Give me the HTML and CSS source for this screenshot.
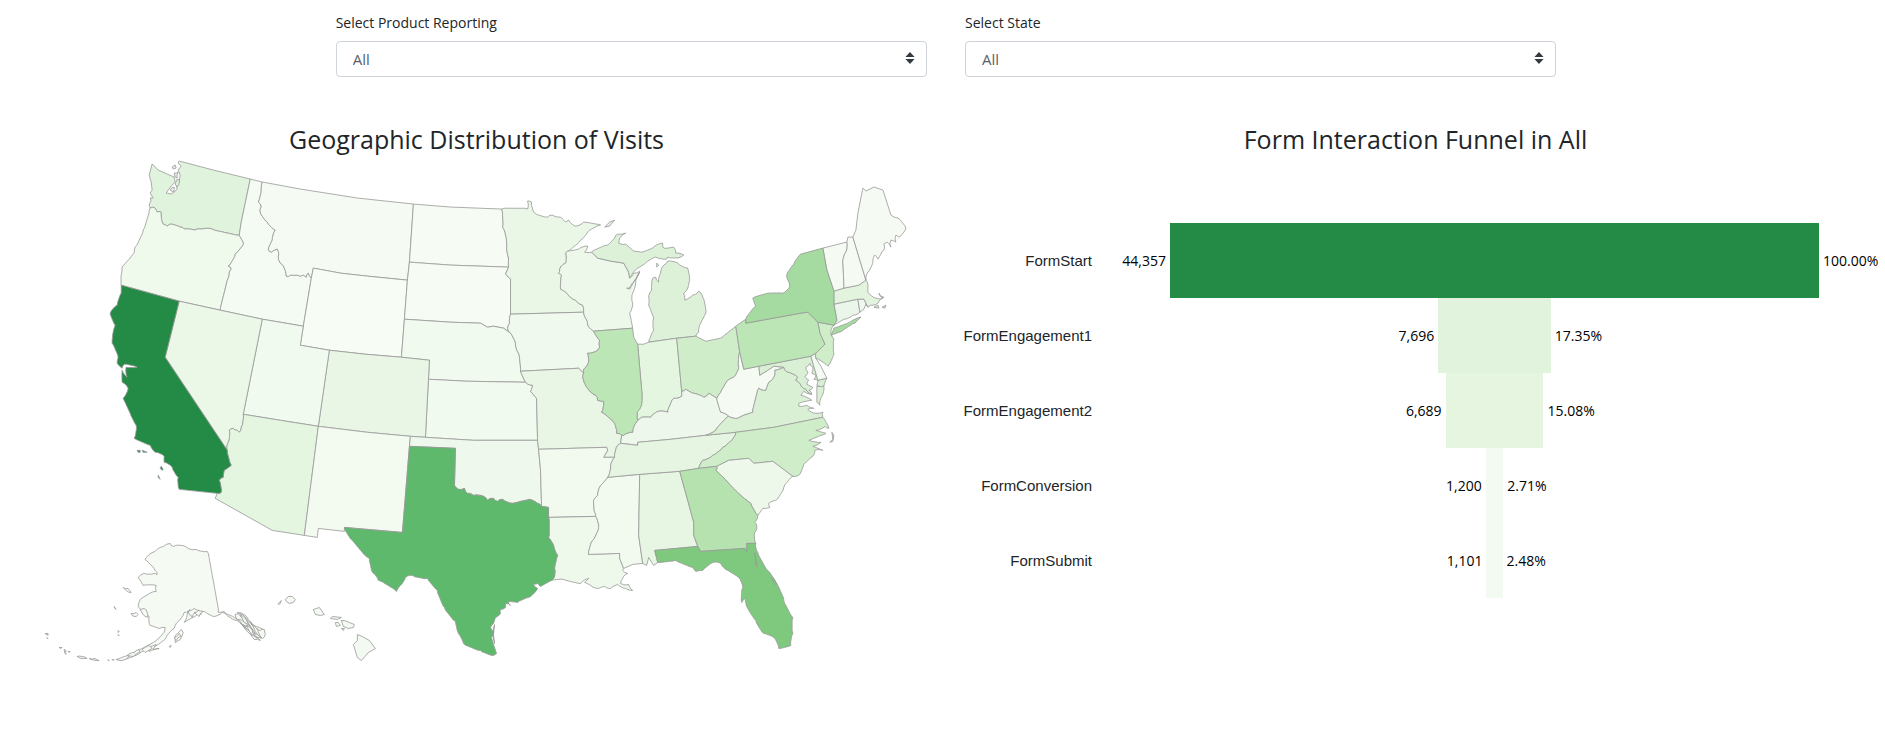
FILE: index.html
```html
<!DOCTYPE html>
<html lang="en">
<head>
<meta charset="utf-8">
<title>Form visits dashboard</title>
<link rel="stylesheet" href="styles.css">
</head>
<body>
<main class="page">
  <form class="filters">
    <div class="filter">
      <label class="filter-label" for="product">Select Product Reporting</label>
      <div class="select-wrap">
        <select class="select" id="product"><option>All</option></select>
        <svg class="select-arrows" viewBox="0 0 10 12" aria-hidden="true"><path d="M5 0 9.6 5H.4zM5 12 .4 7h9.2z"/></svg>
      </div>
    </div>
    <div class="filter">
      <label class="filter-label" for="state">Select State</label>
      <div class="select-wrap">
        <select class="select" id="state"><option>All</option></select>
        <svg class="select-arrows" viewBox="0 0 10 12" aria-hidden="true"><path d="M5 0 9.6 5H.4zM5 12 .4 7h9.2z"/></svg>
      </div>
    </div>
  </form>
  <div class="charts">
    <section class="chart">
      <h2 class="chart-title">Geographic Distribution of Visits</h2>
      <svg class="map" id="map" viewBox="7 156 938 530" role="img" aria-label="Visits by state"></svg>
    </section>
    <section class="chart">
      <h2 class="chart-title">Form Interaction Funnel in All</h2>
      <div class="funnel">
        <div class="step"><span class="step-name">FormStart</span><div class="track"><span class="count">44,357</span><div class="bar bar-start" style="width:100%"></div><span class="share">100.00%</span></div></div>
        <div class="step"><span class="step-name">FormEngagement1</span><div class="track"><span class="count">7,696</span><div class="bar bar-engage1" style="width:17.35%"></div><span class="share">17.35%</span></div></div>
        <div class="step"><span class="step-name">FormEngagement2</span><div class="track"><span class="count">6,689</span><div class="bar bar-engage2" style="width:15.08%"></div><span class="share">15.08%</span></div></div>
        <div class="step"><span class="step-name">FormConversion</span><div class="track"><span class="count">1,200</span><div class="bar bar-convert" style="width:2.71%"></div><span class="share">2.71%</span></div></div>
        <div class="step"><span class="step-name">FormSubmit</span><div class="track"><span class="count">1,101</span><div class="bar bar-convert" style="width:2.48%"></div><span class="share">2.48%</span></div></div>
      </div>
    </section>
  </div>
</main>
<script src="map.js"></script>
</body>
</html>
```

FILE: styles.css
```css
* { box-sizing: border-box; }
body {
  margin: 0;
  background: #fff;
  color: #212529;
  font-family: "Open Sans", "Noto Sans", sans-serif;
}
.page { padding: 12px 0 0 7px; }
.filters {
  display: grid;
  grid-template-columns: 1fr 1fr;
  gap: 38px;
  width: 65%;
  margin: 0 auto;
}
.filter-label {
  display: block;
  margin-bottom: 7px;
  font-size: 14px;
  line-height: 22px;
}
.select-wrap { position: relative; }
.select {
  display: block;
  width: 100%;
  height: 36px;
  padding: 0 30px 0 16px;
  border: 1px solid #ced4da;
  border-radius: 4px;
  background: #fff;
  color: #5a6169;
  font: 15px "Open Sans", "Noto Sans", sans-serif;
  appearance: none;
}
.select-arrows {
  position: absolute;
  top: 10px;
  right: 12px;
  width: 10px;
  height: 14px;
  fill: #343a40;
  pointer-events: none;
}
.charts {
  display: grid;
  grid-template-columns: 1fr 1fr;
  padding-top: 45px;
}
.chart-title {
  margin: 0;
  font-size: 25px;
  font-weight: 400;
  line-height: 34px;
  text-align: center;
}
.map { display: block; width: 100%; }
.state {
  stroke: #999;
  stroke-width: 0.8;
  stroke-linejoin: round;
}
.funnel { padding: 67px 66px 0 0; }
.step {
  display: grid;
  grid-template-columns: 146px 1fr;
  column-gap: 78px;
  align-items: center;
  height: 75px;
}
.step-name {
  font-family: "Liberation Sans", Arial, sans-serif;
  font-size: 15px;
  text-align: right;
}
.track {
  display: flex;
  align-items: center;
  justify-content: center;
  height: 100%;
  color: #000;
  font-size: 14px;
  white-space: nowrap;
}
.bar { flex: none; height: 100%; }
.bar-start { background: #238b45; }
.bar-engage1 { background: #e1f3dc; }
.bar-engage2 { background: #e5f5e0; }
.bar-convert { background: #f3faf1; }
.count, .share {
  display: flex;
  flex: 1 1 0;
  width: 0;
  min-width: 0;
}
.count { justify-content: flex-end; margin-right: 4px; }
.share { margin-left: 4px; }
```

FILE: map.js
```js
// Borders shared between states; a leading "~" marks a river or shore that is drawn rough.
const arcs = {
  waCoast: "150,208 149,205 151,200 150,198 153,198 150,193 152,190 151,182 149,175 152,164 158,170 167,174 174,177 175,182 172,185 168,190 166,193 171,194 174,192 177,189 176,185 179,182 180,175 178,170 181,166 178,163 179,161",
  waTop: "179,161 213,170 250,179",
  waId: "250,179 241,222 239,235",
  waOr: "~150,208 155,208 157,212 161,212 162,222 163,224 167,226 170,224 180,227 184,229 194,230 202,229 212,229 239,235",
  orCoast: "~121,285 121,275 122,267 130,258 134,253 135,247 143,230 149,210 150,208",
  orId: "~239,235 243,242 242,246 235,254 228,266 231,269 229,275 228,278 220,310",
  caOr: "121,285 179,301", orNv: "179,301 220,310",
  idMt: "~262,182 261,190 258,202 261,207 260,212 267,222 275,230 272,240 268,249 271,252 274,250 277,249 278,257 281,264 284,268 286,276 290,275 297,275 300,276 303,275 306,277 308,273 311,278",
  idTop: "250,179 262,182", idWy: "311,278 303,326", idNv: "220,310 262,319", idUt: "262,319 303,326",
  mtTop: "262,182 300,189 357,198 413,204", mtNd: "413,204 409,262", mtSd: "409,262 407,280",
  mtWy: "311,278 313,268 340,273 367,276 407,280",
  wySd: "407,280 404,319", wyNe: "404,319 401,357", wyUt: "303,326 300,345 329,350", wyCo: "329,350 365,354 401,357",
  ndTop: "413,204 450,207 501,209", ndSd: "409,262 450,265 508,267",
  ndMn: "~501,209 502,227 505,235 506,248 508,258 508,267",
  sdMn: "508,267 505,274 510,279 510,314",
  mnTop: "~501,209 527,209 527,201 531,202 534,213 547,217 552,215 560,217 565,222 568,220 575,226 583,222 600,225 587,232 580,240 567,251",
  mnWi: "~567,251 565,253 565,263 559,269 558,273 561,275 560,289 567,294 575,300 582,305 583,312",
  mnIa: "510,314 583,312",
  sdIa: "~510,314 509,323 507,328 510,333",
  sdNe: "404,319 450,322 480,323 487,327 493,326 503,328 510,333",
  neIa: "~510,333 515,343 518,353 520,371", neMo: "~520,371 525,382",
  neCo: "401,357 429,360 428,379", neKs: "428,379 467,381 525,382",
  ksMo: "~525,382 532,385 530,391 536,398", ksMo2: "536,398 537,440",
  ksCo: "428,379 425,437", ksOk: "425,437 473,440 537,440",
  coOk: "410,436 425,437", coNm: "318,426 367,432 410,436", utCo: "329,350 318,426",
  okNm: "410,436 409,446", txOk: "409,446 455,448 454,485",
  txOk2: "~454,485 458,489 464,488 467,493 473,495 483,496 487,500 493,498 497,501 502,499 512,503 520,501 529,499 537,503 541,506",
  txAr: "541,506 548,507 548,517", txLa: "~548,517 548,537 553,545 557,555 554,568 553,578 551,580",
  okMo: "537,440 538,449", okAr: "538,449 540,470 541,506",
  txNm: "409,446 402,532 344,527",
  nmSouth: "304,535 317,537 318,528 344,531 344,527",
  rioGrande: "~344,527 352,540 362,552 369,558 372,572 378,580 396,591 400,585 405,577 412,575 427,578 437,590 444,607 455,621 458,633 463,643 480,650 493,655",
  txCoast: "~493,655 496,653 491,637 493,631 490,627 493,623 495,617 500,613 500,609 505,607 505,603 510,605 508,601 517,602 528,597 537,588 533,583 537,583 540,586 551,580",
  azNm: "318,426 304,535", azSouth: "304,535 272,530 215,498 217,493",
  caAz: "~217,493 221,492 219,480 223,477 224,470 231,465 227,450",
  caNv: "227,450 165,357 179,301",
  azNv: "~227,450 228,442 229,430 233,428 237,430 239,432 241,427 243,414",
  nvUt: "243,414 262,319", utAz: "243,414 280,420 318,426",
  caCoast: "~121,285 121,293 117,305 110,313 115,325 113,332 112,343 118,357 117,363 122,368 124,364 137,367 126,367 127,377 122,370 122,382 128,388 123,398 130,413 136,425 134,438 150,445 155,452 164,456 164,462 172,467 178,477 179,489",
  caSouth: "179,489 217,493",
  iaMo: "520,371 578,368 583,373", iaWi: "~583,312 585,318 587,325 593,331",
  iaIl: "~593,331 599,340 599,347 597,350 587,353 588,362 583,369 583,373",
  wiIl: "593,331 632,328",
  wiNorth: "~567,251 578,249 587,246 584,252 591,252",
  wiMi: "591,252 597,258 610,261 623,263 628,272 629,278",
  wiLake: "~629,278 633,273 639,271 634,280 629,289 626,288 629,288 634,281 639,272 635,283 632,293 632,303 629,313 632,328",
  upCoast: "~591,252 607,245 614,238 617,234 625,233 619,238 618,243 625,244 633,251 640,252 653,247 662,243 662,247 667,248 673,247 675,253 683,255 680,257 667,257 666,259 655,257 645,263 637,268 630,277 629,278",
  miCoast: "~648,342 653,330 653,318 648,305 648,297 651,290 652,278 655,277 658,282 660,273 663,265 667,261 677,263 687,268 689,278 687,288 683,293 684,300 692,295 698,291 702,297 705,313 700,323 698,332 695,336",
  miOh: "695,336 676,338", miIn: "676,338 648,342",
  ilLake: "632,328 633,337 637,344", inLake: "637,344 643,344 648,342",
  ilIn: "637,344 641,390", ilIn2: "~641,390 641,403 637,411 637,420",
  ilKy: "~637,420 635,423 632,432 623,435 621,435",
  ilMo: "~583,373 583,380 587,388 595,395 597,400 603,401 601,412 613,422 616,433 621,435",
  moKy: "621,435 620,443", moTn: "~620,443 617,445 614,457",
  moAr: "538,449 606,447 607,450 603,457 614,457",
  arTn: "~614,457 610,465 607,477", arMs: "~607,477 600,485 597,495 593,500 594,512 595,516",
  arLa: "548,517 595,516", laMs: "~595,516 598,527 592,540 588,554", laMs2: "588,554 619,553 619,558 623,568",
  laCoast: "~551,580 563,579 580,583 588,578 584,582 590,585 598,588 604,586 610,588 617,584 625,588 632,590 628,584 620,583 622,578 627,573 622,570 623,568",
  msCoast: "623,568 632,564 642,563", msAl: "642,563 638,535 639,474", msTn: "607,477 639,474",
  alCoast: "642,563 646,565 648,557 651,562 653,565 657,562", alFl: "657,562 654,550 697,546",
  alGa: "697,546 693,535 693,522 687,500 679,471",
  gaFl: "697,546 700,551 744,548 746,552 746,543 755,543",
  alTn: "639,474 679,471", gaTn: "679,471 698,468", gaNc: "698,468 716,466",
  tnKy: "620,443 637,445 637,442 670,439 705,435", tnVa: "705,435 735,432",
  tnNc: "~735,432 733,437 722,447 712,455 702,460 698,468",
  kyVa: "~705,435 715,430 728,416", kyWv: "~728,416 720,412 716,398",
  kyOh: "~716,398 708,393 703,397 692,393 685,389 681,391", inOh: "676,338 681,391",
  kyIn: "~681,391 681,396 673,398 667,412 658,411 650,417 641,417 637,420",
  ohCoast: "695,336 705,341 720,338 735,326", ohPa: "735,326 739,352",
  ohWv: "~739,352 738,367 733,377 727,380 720,392 716,398",
  wvPa: "739,352 743,369 758,366", paMd: "758,366 810,356", paDe: "810,356 815,353",
  paNj: "815,353 824,344 819,333 817,322", paNy: "817,322 813,318 807,312 800,313 745,323 745,319", paLake: "745,319 735,326",
  nyLake: "~745,319 755,306 752,298 770,293 782,293 789,286 787,280 786,274 793,264 800,254", nyTop: "800,254 822,248",
  nyVt: "822,248 826,270 833,291", nyMa: "833,291 833,304", nyCt: "833,304 836,320 833,325", nyNj: "833,325 817,322",
  njCoast: "~833,325 830,332 833,339 833,353 827,366 815,358 815,353",
  vtTop: "822,248 846,242", vtNh: "~846,242 845,252 842,263 843,288", vtMa: "833,291 843,288", nhMa: "843,288 858,285 865,280",
  nhMe: "865,280 852,237", nhTop: "846,242 847,237 852,237",
  meCoast: "852,237 855,230 857,213 862,188 865,191 873,187 882,190 890,215",
  meShore: "~890,215 897,218 905,228 898,237 895,235 895,242 890,240 890,247 886,242 883,244 883,250 880,254 877,259 874,255 872,261 867,272 865,280",
  maCoast: "~865,280 867,287 867,292 875,298 882,298 878,293 883,297 877,303 870,305 867,307",
  maRi: "867,307 863,299 857,299", maCt: "857,299 833,304", ctRi: "857,299 859,312",
  ctCoast: "~859,312 852,315 843,319 833,325", riCoast: "859,312 863,309 865,304 867,307",
  deMd: "810,356 817,380 826,378", deCoast: "826,378 820,366 815,358 815,353",
  mdCoast: "~826,378 823,386 816,385 817,381 813,379 815,375 811,373 812,367 809,363 805,367 807,372 804,376 808,380 806,384 812,387 808,390 811,394",
  mdVa: "~783,367 787,372 797,377 795,380 800,385 805,389 811,394", wvMd: "758,366 759,375 767,370 773,366 783,367",
  wvVa: "~728,416 737,418 743,415 752,412 758,388 765,390 768,382 773,377 774,370 783,367",
  vaNc: "735,432 773,427 822,417", vaCoast: "~811,394 803,391 800,395 811,400 798,403 798,406 806,405 813,408 807,409 815,413 822,412 822,417",
  ncCoast: "~822,417 828,428 824,426 815,430 825,433 820,435 808,440 820,442 812,446 822,450 814,450 812,456 803,464 799,474 792,476",
  ncSc: "716,466 728,460 748,458 753,463 772,461 792,476",
  scCoast: "~792,476 783,487 775,500 768,503 769,507 762,508 757,515", scGa: "~716,466 715,470 728,483 740,495 750,503 757,515",
  gaCoast: "~757,515 754,522 756,526 754,532 755,543",
  flCoast: "~755,543 757,552 767,570 775,582 783,600 792,617 792,633 790,645 778,648 773,637 763,633 755,620 747,608 745,598 741,602 742,587 738,577 727,570 720,563 712,562 702,570 695,571 692,567 675,560 657,562"
};

// Each state: fill colour, then its border; "-" walks an arc backwards.
const states = {
  WA: "#e0f3dc waCoast waTop waId -waOr", OR: "#eff9ec orCoast waOr orId -orNv -caOr",
  ID: "#f4fbf2 idTop idMt idWy -idUt -idNv -orId -waId", MT: "#f5fbf3 mtTop mtNd mtSd -mtWy -idMt",
  WY: "#f7fcf5 mtWy wySd wyNe -wyCo -wyUt -idWy", ND: "#f6fcf4 ndTop ndMn -ndSd -mtNd",
  SD: "#f6fcf4 ndSd sdMn sdIa -sdNe -wySd -mtSd", NE: "#f1faef sdNe neIa neMo -neKs -neCo -wyNe",
  KS: "#f1faef neKs ksMo ksMo2 -ksOk -ksCo", CO: "#e9f6e5 wyCo neCo ksCo -coOk -coNm -utCo",
  UT: "#f1faef idUt wyUt utCo -utAz nvUt", NV: "#ebf7e7 orNv idNv -nvUt -azNv caNv",
  AZ: "#e4f5e0 utAz azNm azSouth caAz azNv", NM: "#f3fbf1 coNm okNm txNm -nmSouth -azNm",
  OK: "#eef8ec coOk ksOk okMo okAr -txOk2 -txOk -okNm", MN: "#eaf7e6 mnTop mnWi -mnIa -sdMn -ndMn",
  IA: "#f0f9ee mnIa iaWi iaIl -iaMo -neIa -sdIa", WI: "#edf7ea wiNorth wiMi wiLake -wiIl -iaWi -mnWi",
  MI: "#dcf1d8 miCoast miOh miIn", UP: "#dcf1d8 upCoast -wiMi",
  MO: "#e9f6e5 iaMo ilMo moKy moTn -moAr -okMo -ksMo2 -ksMo -neMo",
  AR: "#f2faf0 moAr arTn arMs -arLa -txAr -okAr", LA: "#eef8eb arLa laMs laMs2 -laCoast -txLa",
  MS: "#f2faf0 msTn -msAl -msCoast -laMs2 -laMs -arMs", AL: "#e7f6e3 alTn -alGa -alFl -alCoast msAl",
  IN: "#e4f5e0 inLake -miIn inOh kyIn -ilIn2 -ilIn", OH: "#cfedc9 -miOh ohCoast ohPa ohWv kyOh -inOh",
  KY: "#edf7ec -kyIn -kyOh -kyWv -kyVa -tnKy -moKy -ilKy", TN: "#e6f5e2 tnKy tnVa tnNc -gaTn -alTn -msTn -arTn -moTn",
  WV: "#f5fbf3 wvPa wvMd -wvVa kyWv -ohWv", VA: "#daf0d5 wvVa mdVa vaCoast -vaNc -tnVa kyVa",
  MD: "#daf0d5 paMd deMd mdCoast -mdVa -wvMd", DE: "#f4fbf2 paDe -deCoast -deMd",
  NJ: "#cfedc9 -nyNj njCoast paNj", CT: "#eaf6e9 -maCt ctRi ctCoast -nyCt", RI: "#eff8ee -maRi -riCoast -ctRi",
  MA: "#e2f4de vtMa nhMa maCoast maRi maCt -nyMa", VT: "#f5fbf3 vtTop vtNh -vtMa -nyVt",
  NH: "#f5fbf3 nhTop -nhMe -nhMa -vtNh", ME: "#f5fbf3 meCoast meShore nhMe",
  NC: "#cfedc9 vaNc ncCoast -ncSc -gaNc -tnNc", SC: "#edf8ea ncSc scCoast -scGa",
  IL: "#bde6b7 wiIl ilLake ilIn ilIn2 ilKy -ilMo -iaIl", PA: "#bde6b7 -paLake -paNy -paNj -paDe -paMd -wvPa -ohPa",
  GA: "#b5e2ae gaTn gaNc scGa gaCoast -gaFl alGa", NY: "#a5dba0 nyLake nyTop nyVt nyMa nyCt nyNj paNy",
  FL: "#7fc97f alFl gaFl flCoast", TX: "#5fb96d txOk txOk2 txAr txLa -txCoast -rioGrande -txNm",
  CA: "#238b45 caOr -caNv -caAz -caSouth -caCoast"
};

// Closed outlines that share no border: islands and Alaska.
const islands = [
  ["#e0f3dc", "~172,167 175,165 176,168 173,169"], ["#e0f3dc", "~174,173 178,172 177,178 175,177"],
  ["#e0f3dc", "~177,179 179,180 177,187 175,184"], ["#e0f3dc", "~170,190 174,187 173,192"],
  ["#a5dba0", "~830,335 833,328 847,323 852,320 860,317 854,323 850,325 841,331"],
  ["#daf0d5", "~816,386 823,386 821,396 819,405 816,402"],
  ["#238b45", "137,450 140,450 140,452 138,452"], ["#238b45", "142,450 147,452 143,452"],
  ["#238b45", "161,466 163,469 162,470 160,468"], ["#238b45", "158,475 160,479 158,477"],
  ["#dcf1d8", "604,227 609,222 614,220 609,226"], ["#dcf1d8", "656,263 658,265 656,267"],
  ["#e2f4de", "873,307 877,305 878,308"], ["#e2f4de", "881,307 885,305 884,308"],
  ["#cfedc9", "831,432 833,435 832,441 829,442 832,439"],
  ["#5fb96d", "494,643 492,633 494,624 493,634"],
  ["#7fc97f", "754,552 756,566 755,562"], ["#7fc97f", "772,577 776,583 774,584 771,578"],
  ["#f5fbf3", "~170,543 173,546 181,545 188,548 196,549 207,551 218,612 224,611 230,617 237,620 243,624 248,630 257,637 261,638 263,629 256,626 247,617 239,612 235,614 238,620 230,615 222,612 213,616 207,613 201,611 195,616 189,619 184,622 187,614 190,609 184,612 178,621 174,628 166,637 156,645 149,649 139,653 130,657 119,659 130,654 142,648 153,642 162,634 165,627 159,628 150,625 149,616 142,611 138,606 140,599 148,594 156,591 156,585 143,585 138,577 144,573 154,573 157,574 155,570 150,564 145,559 149,554 155,551 160,547 166,544"],
  ["#f5fbf3", "~175,635 181,629 183,632 180,639 175,642"], ["#f5fbf3", "~174,637 179,633 181,636 176,640"],
  ["#f5fbf3", "~131,613 136,612 138,614 136,616 132,615"],
  ["#f5fbf3", "~140,609 144,608 147,612 147,617 143,614"],
  ["#f5fbf3", "~123,587 128,588 131,592 127,591"], ["#f5fbf3", "114,606 116,609 115,608"],
  ["#f5fbf3", "118,630 118,632 119,631"], ["#f5fbf3", "118,634 119,635 118,635"],
  ["#f5fbf3", "45,633 48,633 48,635"], ["#f5fbf3", "47,637 48,638 47,638"], ["#f5fbf3", "59,647 62,647 61,648"],
  ["#f5fbf3", "~64,649 66,650 66,654 65,653"], ["#f5fbf3", "68,651 70,651 69,652"],
  ["#f5fbf3", "~77,656 82,656 87,658 81,658"], ["#f5fbf3", "~89,658 95,658 99,660 92,659"],
  ["#f5fbf3", "108,659 109,660 108,660"], ["#f5fbf3", "112,659 114,659 113,660"],
  ["#f5fbf3", "~116,659 124,656 130,653 128,657 120,660"], ["#f5fbf3", "~127,655 134,652 139,649 140,652 133,656"],
  ["#f5fbf3", "~237,612 242,614 247,620 244,620"], ["#f5fbf3", "~238,619 243,621 248,626 244,626"],
  ["#f5fbf3", "~243,624 250,627 255,634 249,632"], ["#f5fbf3", "~250,621 255,627 262,634 256,633"],
  ["#f5fbf3", "~248,631 254,635 260,640 254,639"], ["#f5fbf3", "~245,618 252,625 260,630 264,629 265,634 262,638 255,633"],
  ["#f5fbf3", "~240,614 246,619 250,626 244,622"], ["#f5fbf3", "~246,625 252,630 257,638 251,634"],
  ["#f5fbf3", "~252,624 258,631 261,637 255,631"], ["#f5fbf3", "~240,622 247,629 252,635 246,630"],
  ["#f5fbf3", "~188,611 194,608 199,610 201,614 195,612 192,617 189,614"],
  ["#f5fbf3", "~194,612 198,610 203,611 199,616"],
  ["#f5fbf3", "~150,646 156,644 153,649 159,648 149,651"], ["#f5fbf3", "~142,649 149,645 152,648 145,652"],
  ["#f5fbf3", "169,646 171,645 170,647"],
  ["#f3faf1", "278,603 281,600 280,603 278,604"], ["#f3faf1", "285,599 288,596 292,596 295,599 293,602 289,603 286,601"],
  ["#f3faf1", "313,609 319,607 324,614 320,615 315,614"], ["#f3faf1", "330,618 332,616 341,617 337,619"],
  ["#f3faf1", "335,622 338,622 340,625 336,626"], ["#f3faf1", "341,620 344,620 349,622 354,624 353,627 348,628 343,626"],
  ["#f3faf1", "341,628 344,628 343,630"],
  ["#f3faf1", "357,634 362,636 369,640 375,648 368,652 361,660 357,657 353,644 357,640"]
];

function points(text) {
  const rough = text[0] === "~";
  const base = text.replace("~", "").split(" ").map(p => p.split(",").map(Number));
  return rough ? roughen(base) : base;
}

// Adds small alternating kinks between points, the same ones on every load.
function roughen(base) {
  const out = [base[0]];
  for (let i = 1; i < base.length; i++) {
    const [x0, y0] = base[i - 1], [x1, y1] = base[i];
    const len = Math.hypot(x1 - x0, y1 - y0);
    const n = Math.max(1, Math.round(len / 2.5));
    for (let k = 1; k < n; k++) {
      const s = Math.sin(x0 * 12.9 + y0 * 78.2 + k * 37.7) * 0.8;
      const t = k / n;
      out.push([x0 + (x1 - x0) * t - (y1 - y0) / len * s, y0 + (y1 - y0) * t + (x1 - x0) / len * s]);
    }
    out.push([x1, y1]);
  }
  return out;
}

const map = document.getElementById("map");
function draw(fill, pts) {
  const path = document.createElementNS("http://www.w3.org/2000/svg", "path");
  path.setAttribute("class", "state");
  path.setAttribute("fill", fill);
  path.setAttribute("d", "M" + pts.map(p => p[0].toFixed(1) + " " + p[1].toFixed(1)).join("L") + "Z");
  map.appendChild(path);
}

for (const spec of Object.values(states)) {
  const [fill, ...names] = spec.split(" ");
  draw(fill, names.flatMap(n => n[0] === "-" ? points(arcs[n.slice(1)]).reverse() : points(arcs[n])));
}
islands.forEach(([fill, text]) => draw(fill, points(text)));
```
